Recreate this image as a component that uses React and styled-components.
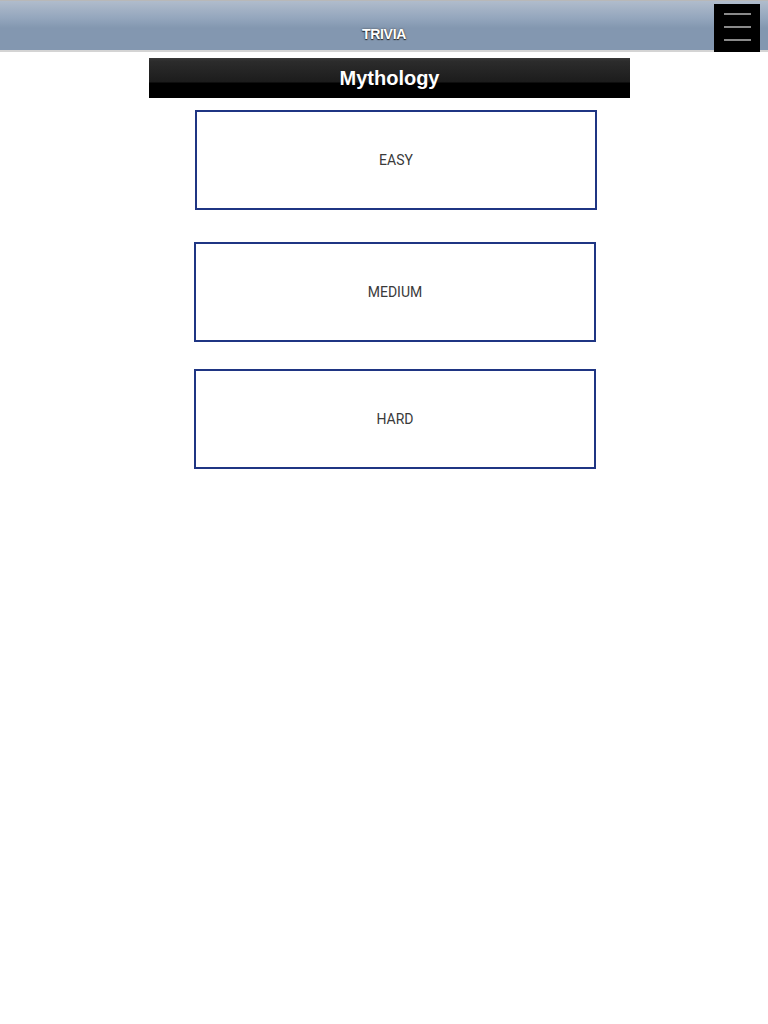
import React from "react";
import styled, { createGlobalStyle } from "styled-components";

const Global = createGlobalStyle`
  html, body { margin: 0; padding: 0; background: #fff; }
  body { font-family: "Liberation Sans", Arial, sans-serif; }
`;

const Header = styled.header`
  position: relative;
  height: 49px;
  border-top: 1px solid #b8b8b8;
  border-bottom: 2px solid #d4d4d4;
  background: linear-gradient(#b0bccc 0%, #94a6bd 35%, #8397b0 55%, #8397b0 100%);
  display: flex;
  align-items: flex-end;
  justify-content: center;
`;

const HeaderTitle = styled.h1`
  margin: 0 0 8px 0;
  font-family: "Liberation Sans", Arial, sans-serif;
  font-size: 14px;
  font-weight: bold;
  letter-spacing: -0.3px;
  color: #fff;
  text-shadow: 0 1px 1px #222, 0 0 2px #444;
`;

const MenuButton = styled.button`
  position: absolute;
  top: 3px;
  right: 8px;
  width: 46px;
  height: 48px;
  background: #000;
  border: none;
  padding: 0;
  display: flex;
  flex-direction: column;
  align-items: center;
  justify-content: flex-start;
  gap: 11px;
  padding-top: 9px;
  cursor: pointer;
`;

const MenuLine = styled.span`
  display: block;
  width: 27px;
  height: 2px;
  background: #8a8a8a;
`;

const Main = styled.main`
  display: flex;
  flex-direction: column;
  align-items: flex-start;
  padding-left: 149px;
`;

const TitleBar = styled.div`
  margin-top: 6px;
  width: 481px;
  height: 40px;
  background: linear-gradient(#3a3a3a 0px, #2c2c2c 3px, #1c1c1c 24px, #000 25px, #000 100%);
  display: flex;
  align-items: center;
  justify-content: center;
`;

const TitleText = styled.h2`
  margin: 0;
  font-family: "Liberation Sans", Arial, sans-serif;
  font-size: 20px;
  font-weight: bold;
  color: #fff;
  text-shadow: 0 1px 1px #000;
`;

const LevelButton = styled.button`
  box-sizing: border-box;
  margin-top: ${(p) => p.$top}px;
  margin-left: ${(p) => p.$left}px;
  width: 402px;
  height: 100px;
  background: #fff;
  border: 2px solid #1f3583;
  border-radius: 0;
  font-family: Roboto, "Liberation Sans", Arial, sans-serif;
  font-size: 14px;
  color: #3a3a3a;
  text-transform: uppercase;
  cursor: pointer;
  display: flex;
  align-items: center;
  justify-content: center;
  padding: 0;
`;

const levels = [
  { label: "Easy", top: 12, left: 46 },
  { label: "Medium", top: 32, left: 45 },
  { label: "Hard", top: 27, left: 45 },
];

export default function App() {
  return (
    <>
      <Global />
      <Header>
        <HeaderTitle>TRIVIA</HeaderTitle>
        <MenuButton aria-label="Menu">
          <MenuLine />
          <MenuLine />
          <MenuLine />
        </MenuButton>
      </Header>
      <Main>
        <TitleBar>
          <TitleText>Mythology</TitleText>
        </TitleBar>
        {levels.map((l) => (
          <LevelButton key={l.label} $top={l.top} $left={l.left}>
            {l.label}
          </LevelButton>
        ))}
      </Main>
    </>
  );
}
